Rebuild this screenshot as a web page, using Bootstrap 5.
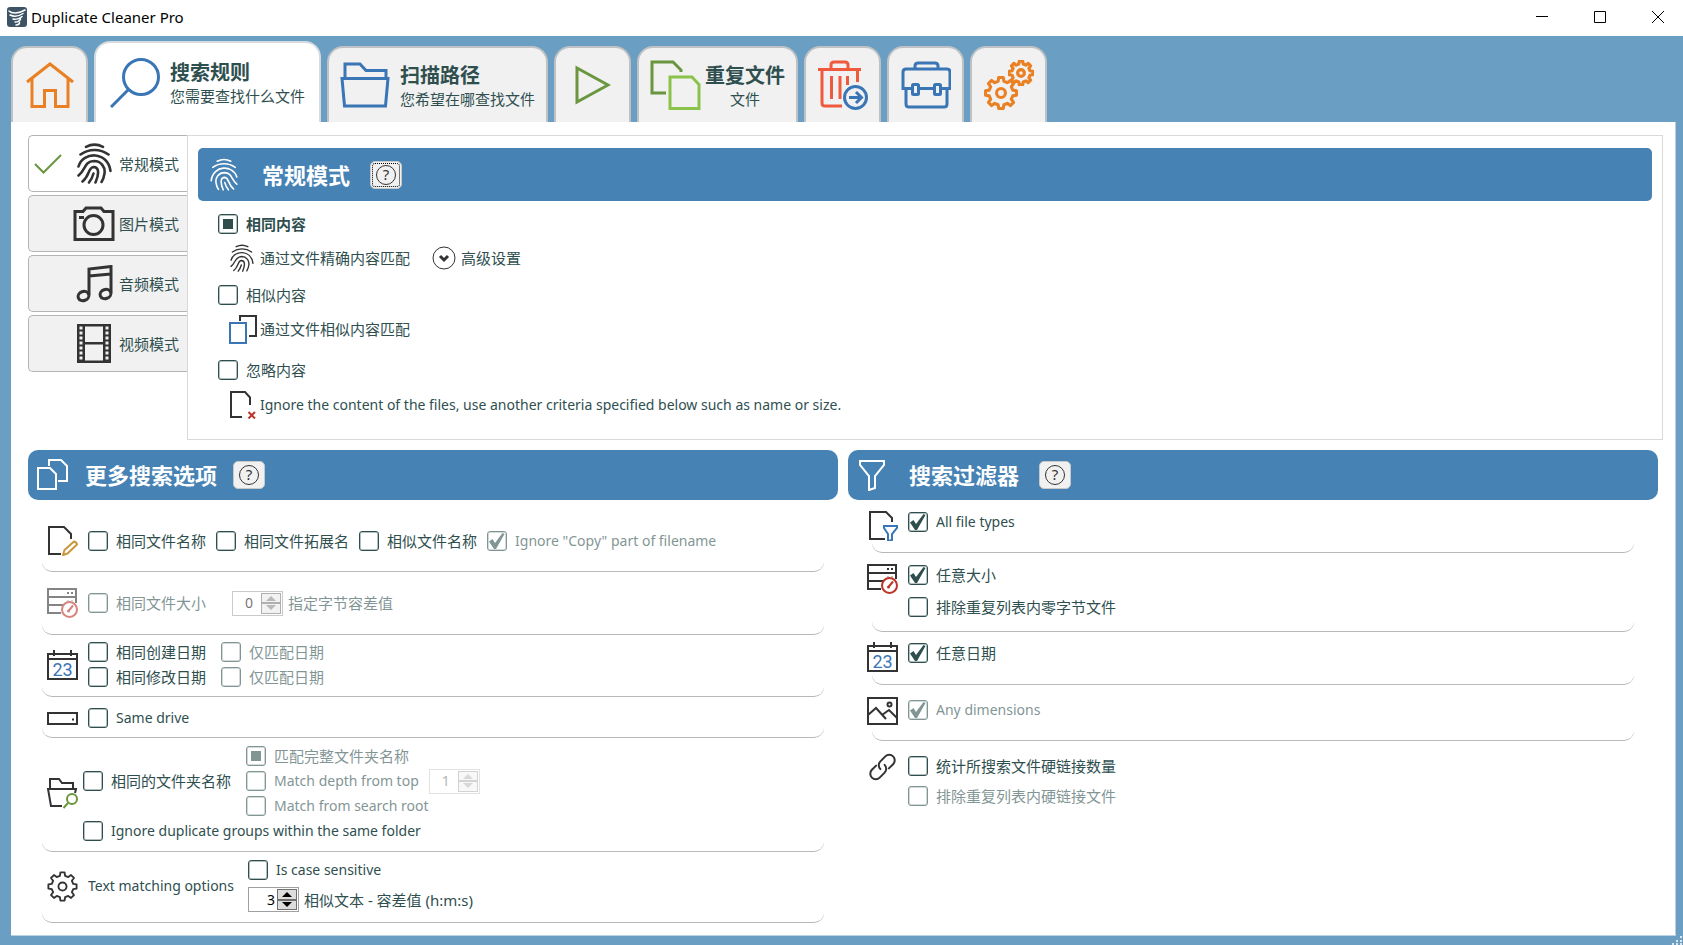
<!DOCTYPE html>
<html lang="zh-CN">
<head>
<meta charset="utf-8">
<meta name="viewport" content="width=device-width, initial-scale=1">
<title>Duplicate Cleaner Pro</title>
<link href="https://cdn.jsdelivr.net/npm/bootstrap@5.3.0/dist/css/bootstrap.min.css" rel="stylesheet">
<style>
:root{--ink:#2f4f4f;--frame:#6a9ec2;--steel:#4682b4;--face:#f1f1f1;--line:#b8b8b8}
body{font-family:"Noto Sans","Noto Sans CJK SC",sans-serif;font-size:15px;line-height:20px;color:var(--ink);background:var(--frame)}
button{color:inherit}
svg{display:block;flex:none;fill:none;stroke:#333;stroke-width:2}
svg text{stroke:none}
.latin{font-size:14px}
.stroke-3{stroke-width:3}
.tone-orange{stroke:#e98024}
.tone-blue{stroke:#3a75b5}
.tone-green{stroke:#6a963f}

/* title bar */
.title-bar{height:36px;background:#fff;color:#000;padding-left:7px;padding-bottom:2px}
.title-bar .win-btn{width:50px;height:34px}
.title-bar .win-btn svg{stroke:#000;stroke-width:1}

/* main tabs */
.main-tabs{height:86px;gap:6px;padding-left:11px}
.main-tab{height:76px;min-width:77px;background:var(--face);border:2px solid #bfc2c4;border-bottom:0;border-radius:16px 16px 0 0;padding:0 11px}
.main-tab.active{height:81px;background:#fff;border-color:#d4dade;padding:0 14px}
.main-tab .tab-text{padding-top:3px}
.tab-title{font-size:20px;line-height:24px;font-weight:600}
.tab-sub{line-height:22px}

/* page surface */
.surface{background:#fff;margin:0 7px 9px 11px;padding:13px 12px 11px 17px;border-right:1px solid #b9d0e1;border-bottom:1px solid #b9d0e1}

/* mode tabs */
.mode-list{width:159px;gap:3px}
.mode-tab{height:57px;background:var(--face);border:1px solid #b4b4b4;border-right:0;border-radius:5px 0 0 5px;padding:0 0 0 5px}
.mode-tab.active{background:#fff}
.mode-check{width:28px;margin-right:11px}
.mode-icon{width:42px;margin-right:4px}

.mode-panel{border:1px solid #d9d9d9;padding:12px 10px 19px}
.section-head{background:var(--steel);color:#fff}
.section-head h2{font-size:22px;line-height:28px;font-weight:700}
.section-head svg{stroke:#fff}
.mode-panel .section-head{height:53px;border-radius:5px;padding-left:12px}
.column-head{height:50px;border-radius:10px}
.filter-head{padding-left:11px}
.help-btn{width:32px;height:28px;margin-left:20px;background:var(--face);border:1px solid #c8c8c8;border-radius:5px}
.help-btn svg{stroke:#333;stroke-width:1}
.help-btn text{fill:#333;font-size:15px}
.help-btn.focused{outline:1px dotted #000;outline-offset:-3px}
.criteria{padding:13px 20px 0}
.sub-line{height:30px;margin:9px 0 12px;padding-left:12px;gap:4px}
.sub-line.tall{margin-bottom:16px}
.sub-line.last{margin:10px 0 0}
.sub-icon{width:26px}
.more-btn{--bs-btn-font-size:15px;--bs-btn-line-height:20px;--bs-btn-color:var(--ink);gap:5px;margin-left:18px}

/* tick boxes */
.tick{display:flex;align-items:center;gap:8px;min-height:20px;white-space:nowrap}
.tick .form-check-input{width:20px;height:20px;margin:0;flex:none;border:1px solid var(--ink);border-radius:3px;background-color:#fff;background-size:18px 18px;box-shadow:inset 0 0 0 1px #b4c0c0}
.tick .form-check-input:checked{background-color:#fff;border-color:var(--ink);background-image:url("data:image/svg+xml,%3Csvg xmlns='http://www.w3.org/2000/svg' viewBox='0 0 18 18'%3E%3Cpath d='M1 9.500l3.500-2.500 2.500 4L14.500 1l2 1L8 17H6z' fill='%232f4f4f'/%3E%3C/svg%3E")}
.tick .form-check-input.square:checked{background-image:url("data:image/svg+xml,%3Csvg xmlns='http://www.w3.org/2000/svg' viewBox='0 0 18 18'%3E%3Cpath d='M4 4h10v10H4z' fill='%232f4f4f'/%3E%3C/svg%3E")}
.tick .form-check-input:disabled{opacity:.6}
.tick .form-check-input:disabled~label{opacity:.6}
.faded{opacity:.6}

/* option rows */
.columns{--bs-gutter-x:10px;margin-top:10px;padding-right:5px}
.opt-row{border-bottom:1px solid var(--line);border-radius:0 0 10px 10px;gap:10px}
.opt-list{margin:0 14px}
.opt-list .opt-row{padding-left:5px}
.opt-icon{width:31px;flex:none}
.row-name{padding-top:26px;padding-bottom:15px}
.row-size{padding-top:16px;padding-bottom:16px}
.row-date{padding-top:7px;padding-bottom:9px}
.row-drive{padding-top:11px;padding-bottom:9px}
.row-folder{padding-top:8px;padding-bottom:10px}
.row-folder.opt-row{gap:5px}
.row-text{padding-top:8px;padding-bottom:10px}
.stack-5{gap:5px}
.stack-7{gap:7px}
.gap-10{gap:10px}
.gap-15{gap:15px}
.filter-list{margin:0 24px}
.filter-list .opt-icon{margin-left:-5px}
.filter-list .opt-row{padding-top:11px;padding-bottom:11px}
.filter-list .row-tall{padding-bottom:14px}
.filter-list .row-close{padding-top:10px;padding-bottom:12px}
.filter-list .row-dim{padding-top:11px;padding-bottom:14px}
.stack-12{gap:12px;padding-top:1px}

/* number box */
.spin{width:51px;height:25px;border:1px solid #a0a0a0;background:#fff;padding:1px}
.spin input{min-width:0;width:27px;border:0;padding:0 2px 0 0;text-align:right;font-size:14px;color:#000;background:none;appearance:textfield;-moz-appearance:textfield}
.spin input::-webkit-inner-spin-button{appearance:none;-webkit-appearance:none}
.spin-btns{width:20px;flex:none}
.spin-btns button{flex:1 1 0;min-height:0;border:1px solid #707070;background:#ddd;padding:0}
.spin-btns svg{fill:#000;stroke:none}
.spin.off{opacity:.55}
.spin.off input{padding-right:8px}
.spin.off button{background:#e9e9e9}
.spin.off svg{fill:#808080}
.spin.dim{opacity:.3}
.in-line{margin:-3px 0}

.grip{right:1px;bottom:0}
.grip svg{fill:#dfe7ee;stroke:none}
</style>
</head>
<body class="d-flex flex-column min-vh-100 m-0">

<svg width="0" height="0" class="position-absolute" aria-hidden="true">
  <symbol id="finger" viewBox="0 0 35 42">
    <path stroke-linecap="round" d="M9 3.800C14.500 1 20.500 1 26 3.800M3.500 11.500C12 5.500 23 5.500 31.500 11.500M1.500 23.500C6 8 31 8 33.500 28M1.500 32.500C9 26.500 7 18.500 17 18C24 18 28.500 24 27.500 30.500C27 34 26.500 36 24.500 39M5.500 38.500C13 32.500 11 24.500 16.500 24C22.500 24 22 31.500 18.500 39.500M12 39.500C14.500 36.500 15.500 34 16.500 30.500"/>
  </symbol>
  <symbol id="gear" viewBox="-16.500 -16.500 33 33">
    <path stroke-linejoin="round" d="M11.400-2.800L15-2.200 15 2.200 11.400 2.800 10 6.100 12.200 9.100 9.100 12.200 6.100 10 2.800 11.400 2.200 15-2.200 15-2.800 11.400-6.100 10-9.100 12.200-12.200 9.100-10 6.100-11.400 2.800-15 2.200-15-2.200-11.400-2.800-10-6.100-12.200-9.100-9.100-12.200-6.100-10-2.800-11.400-2.200-15 2.200-15 2.800-11.400 6.100-10 9.100-12.200 12.200-9.100 10-6.100Z"/>
    <circle r="4.300"/>
  </symbol>
  <symbol id="store" viewBox="0 0 31 30">
    <path d="M14 25H1V1H29V15M1 9H29M1 17H17M20 5H22M24 5H26"/>
    <path stroke="none" fill="#bbb" d="M20 12h2v1h-2zM24 12h2v1h-2z"/>
    <circle cx="22.500" cy="21.500" r="7.500" stroke="#bb3528"/>
    <path d="M21.500 23L26 17.500" stroke="#bb3528"/><circle cx="21.500" cy="23" r="1.500" stroke="none" fill="#bb3528"/>
  </symbol>
</svg>

<header class="title-bar d-flex align-items-center">
  <svg width="20" height="20" viewBox="0 0 20 20" aria-hidden="true"><rect width="20" height="20" rx="3" fill="#3d5466" stroke="none"/><path stroke="#fff" stroke-width="1.500" stroke-linecap="round" d="M2 4C5 7 12 6.500 18 3M3 8C8 10.500 13 8.500 16 6.500M6 12C9 13 13 11.500 15 9.500M8 15C10 15.500 13 14 13.500 12M9 18C11 18 12.500 17 12.500 15.500"/></svg>
  <span class="ms-1">Duplicate Cleaner Pro</span>
  <div class="ms-auto d-flex gap-2">
    <button class="btn p-0 win-btn d-flex align-items-center justify-content-center" aria-label="最小化"><svg width="12" height="12"><path d="M0 5.500H12"/></svg></button>
    <button class="btn p-0 win-btn d-flex align-items-center justify-content-center" aria-label="最大化"><svg width="12" height="12"><path d="M.5 .5H11.500V11.500H.5Z"/></svg></button>
    <button class="btn p-0 win-btn d-flex align-items-center justify-content-center" aria-label="关闭"><svg width="12" height="12"><path d="M0 0L12 12M12 0L0 12"/></svg></button>
  </div>
</header>

<nav class="main-tabs d-flex align-items-end">
  <button class="main-tab d-flex align-items-center justify-content-center" aria-label="主页">
    <svg class="stroke-3 tone-orange" width="48" height="46"><path d="M1 20L24 2L47 20M6 17V44.500H18.500V28.500H29.500V44.500H42V17"/></svg>
  </button>
  <button class="main-tab active d-flex align-items-center gap-10">
    <svg class="stroke-3 tone-blue" width="50" height="50"><circle cx="31" cy="19" r="17.500"/><path d="M18.500 31.500L1 49"/></svg>
    <span class="tab-text text-start"><span class="tab-title d-block">搜索规则</span><span class="tab-sub d-block">您需要查找什么文件</span></span>
  </button>
  <button class="main-tab d-flex align-items-center gap-10">
    <svg class="stroke-3 tone-blue" width="50" height="46"><path d="M2 16.500H48L45.500 44H4.500ZM5 16V2H20L26 8.500H46V16"/></svg>
    <span class="tab-text text-start"><span class="tab-title d-block">扫描路径</span><span class="tab-sub d-block">您希望在哪查找文件</span></span>
  </button>
  <button class="main-tab d-flex align-items-center justify-content-center" aria-label="开始">
    <svg class="stroke-3 tone-green" width="36" height="40"><path d="M2 3L33 20L2 37Z"/></svg>
  </button>
  <button class="main-tab d-flex align-items-center">
    <svg class="stroke-3" width="51" height="50"><path stroke="#6a963f" d="M16 33H2V2H23L31 10V12"/><path stroke="#8bc34a" d="M20 17H42L49 24.500V48.500H20Z"/></svg>
    <span class="tab-text text-center ms-1"><span class="tab-title d-block">重复文件</span><span class="tab-sub d-block">文件</span></span>
  </button>
  <button class="main-tab d-flex align-items-center justify-content-center" aria-label="删除">
    <svg class="stroke-3" width="50" height="50"><path stroke="#ef5a3f" d="M0 9.500H43M13 8V5Q13 2 16 2H27Q30 2 30 5V8M4 9V43Q4 46 7 46H24M39.500 9V22M13.500 16V39M22 16V39M29.500 16V25"/><circle cx="37.500" cy="37.500" r="11" stroke="#3a75b5"/><path stroke="#3a75b5" d="M31 37.500H43M38 32L43.500 37.500L38 43"/></svg>
  </button>
  <button class="main-tab d-flex align-items-center justify-content-center" aria-label="工具">
    <svg class="stroke-3 tone-blue" width="50" height="48"><path d="M14 7.500V5Q14 2 17 2H34Q37 2 37 5V7.500M11 27.500H2V11Q2 8 5 8H46Q49 8 49 11V27.500H40M18 27.500H33M5 28V43Q5 46 8 46H43Q46 46 46 43V28"/><rect x="11.500" y="23.500" width="6" height="10" rx="1"/><rect x="33.500" y="23.500" width="6" height="10" rx="1"/></svg>
  </button>
  <button class="main-tab d-flex align-items-center justify-content-center" aria-label="设置">
    <svg class="tone-orange" width="50" height="50"><use class="stroke-3" href="#gear" x="0" y="16" width="34" height="34"/><use href="#gear" x="24" y="0" width="26" height="26" stroke-width="4"/></svg>
  </button>
</nav>

<main class="surface flex-grow-1">
  <section class="d-flex align-items-start">
    <div class="mode-list d-flex flex-column flex-shrink-0">
      <button class="mode-tab active d-flex align-items-center">
        <span class="mode-check"><svg class="tone-green" width="28" height="22"><path d="M1 11L9.500 19.500L27 2"/></svg></span>
        <span class="mode-icon d-flex justify-content-center"><svg width="35" height="42" stroke-width="3"><use href="#finger" stroke-width="2.600"/></svg></span><span>常规模式</span>
      </button>
      <button class="mode-tab d-flex align-items-center">
        <span class="mode-check"></span>
        <span class="mode-icon d-flex justify-content-center"><svg class="stroke-3" width="42" height="36"><path d="M2 5.500H10L13 2H28L31 5.500H40V33.500H2ZM6 11.500H11"/><circle cx="20.500" cy="19" r="9.500"/></svg></span><span>图片模式</span>
      </button>
      <button class="mode-tab d-flex align-items-center">
        <span class="mode-check"></span>
        <span class="mode-icon d-flex justify-content-center"><svg class="stroke-3" width="37" height="38"><path d="M13 30V4L35 1.500V28M13 11L35 9"/><ellipse cx="7.500" cy="31" rx="5.500" ry="4.500" transform="rotate(-20 7.500 31)"/><ellipse cx="29.500" cy="29" rx="5.500" ry="4.500" transform="rotate(-20 29.500 29)"/></svg></span><span>音频模式</span>
      </button>
      <button class="mode-tab d-flex align-items-center">
        <span class="mode-check"></span>
        <span class="mode-icon d-flex justify-content-center"><svg width="34" height="39"><path fill="#333" stroke="none" d="M0 0H34V39H0Z"/><path fill="#f1f1f1" stroke="none" d="M8 2.500H26V18H8ZM8 20.500H26V36.500H8Z"/><path stroke="#f1f1f1" stroke-width="3" stroke-dasharray="3 2" d="M4 2.500V37M30 2.500V37"/></svg></span><span>视频模式</span>
      </button>
    </div>

    <div class="mode-panel flex-grow-1">
      <div class="section-head d-flex align-items-center">
        <svg width="28" height="36"><use href="#finger" transform="matrix(-1 0 0 1 28 0)"/></svg>
        <h2 class="mb-0 ms-4">常规模式</h2>
        <button class="help-btn focused p-0 d-flex align-items-center justify-content-center" aria-label="帮助"><svg width="22" height="22"><circle cx="11" cy="11" r="9.500"/><text x="11" y="16" text-anchor="middle">?</text></svg></button>
      </div>
      <div class="criteria">
        <div class="tick"><input class="form-check-input square" type="checkbox" id="same" checked><label for="same" class="fw-bold">相同内容</label></div>
        <div class="sub-line d-flex align-items-center">
          <span class="sub-icon"><svg width="24" height="29"><use href="#finger"/></svg></span><span>通过文件精确内容匹配</span>
          <button class="more-btn btn p-0 border-0 d-flex align-items-center"><svg width="24" height="24" stroke-width="1"><circle cx="12" cy="12" r="11" stroke-width="1"/><path class="stroke-3" d="M8 10L12 14L16 10"/></svg><span>高级设置</span></button>
        </div>
        <div class="tick"><input class="form-check-input" type="checkbox" id="similar"><label for="similar">相似内容</label></div>
        <div class="sub-line tall d-flex align-items-center">
          <span class="sub-icon d-flex justify-content-center"><svg width="30" height="29"><path d="M12 6V1H28V21H21"/><path stroke="#3a75b5" d="M2 8H18V28H2Z"/></svg></span><span>通过文件相似内容匹配</span>
        </div>
        <div class="tick"><input class="form-check-input" type="checkbox" id="ignore"><label for="ignore">忽略内容</label></div>
        <div class="sub-line last d-flex align-items-center">
          <span class="sub-icon"><svg width="26" height="28"><path d="M12 26H1V1H15L20 6.500V14"/><path stroke="#bb3528" d="M18.500 21L25 27.500M25 21L18.500 27.500"/></svg></span><span class="latin">Ignore the content of the files, use another criteria specified below such as name or size.</span>
        </div>
      </div>
    </div>
  </section>

  <section class="row columns">
    <div class="col-6">
      <div class="section-head column-head d-flex align-items-center ps-2">
        <svg width="33" height="32"><path d="M13 7V1H25L31 7V22H22M2 9H14L20 15V30H2Z"/></svg>
        <h2 class="mb-0 ms-3">更多搜索选项</h2>
        <button class="help-btn p-0 ms-3 d-flex align-items-center justify-content-center" aria-label="帮助"><svg width="22" height="22"><circle cx="11" cy="11" r="9.500"/><text x="11" y="16" text-anchor="middle">?</text></svg></button>
      </div>
      <div class="opt-list">
        <div class="opt-row row-name d-flex align-items-center">
          <span class="opt-icon"><svg width="31" height="30"><path d="M14 28H2V1H17L24 8V13"/><path stroke="#c9973b" stroke-linejoin="round" d="M16 29L17.500 24L27 15.500Q29.500 16 30 18.500L20.500 27.500Z"/></svg></span>
          <div class="tick"><input class="form-check-input" type="checkbox" id="n1"><label for="n1">相同文件名称</label></div>
          <div class="tick"><input class="form-check-input" type="checkbox" id="n2"><label for="n2">相同文件拓展名</label></div>
          <div class="tick"><input class="form-check-input" type="checkbox" id="n3"><label for="n3">相似文件名称</label></div>
          <div class="tick"><input class="form-check-input" type="checkbox" id="n4" checked disabled><label for="n4" class="latin">Ignore "Copy" part of filename</label></div>
        </div>
        <div class="opt-row row-size d-flex align-items-center">
          <span class="opt-icon faded"><svg width="31" height="30"><use href="#store"/></svg></span>
          <div class="tick"><input class="form-check-input" type="checkbox" id="s1" disabled><label for="s1">相同文件大小</label></div>
          <div class="d-flex align-items-center ms-3 stack-5">
            <div class="spin off d-flex"><input type="number" id="s2" value="0" disabled><div class="spin-btns d-flex flex-column"><button disabled class="d-flex align-items-center justify-content-center" aria-label="增加"><svg width="12" height="6"><path d="M1 6L6 1L11 6Z"/></svg></button><button disabled class="d-flex align-items-center justify-content-center" aria-label="减少"><svg width="12" height="6"><path d="M1 0L6 5L11 0Z"/></svg></button></div></div>
            <label for="s2" class="faded">指定字节容差值</label>
          </div>
        </div>
        <div class="opt-row row-date d-flex align-items-center">
          <span class="opt-icon"><svg width="31" height="30" viewBox="0 0 31 30"><path d="M1 4H30V29H1ZM1 9H30M7 0V6M24 0V6"/><text x="15.500" y="26" text-anchor="middle" font-family="Roboto" font-size="18" fill="#3a75b5">23</text></svg></span>
          <div class="d-flex flex-column stack-5">
            <div class="d-flex gap-15">
              <div class="tick"><input class="form-check-input" type="checkbox" id="d1"><label for="d1">相同创建日期</label></div>
              <div class="tick"><input class="form-check-input" type="checkbox" id="d2" disabled><label for="d2">仅匹配日期</label></div>
            </div>
            <div class="d-flex gap-15">
              <div class="tick"><input class="form-check-input" type="checkbox" id="d3"><label for="d3">相同修改日期</label></div>
              <div class="tick"><input class="form-check-input" type="checkbox" id="d4" disabled><label for="d4">仅匹配日期</label></div>
            </div>
          </div>
        </div>
        <div class="opt-row row-drive d-flex align-items-center">
          <span class="opt-icon"><svg width="31" height="13"><path d="M1 1H30V12H1ZM25 7.500H27"/></svg></span>
          <div class="tick"><input class="form-check-input" type="checkbox" id="v1"><label for="v1" class="latin">Same drive</label></div>
        </div>
        <div class="opt-row row-folder d-flex align-items-center">
          <span class="opt-icon"><svg width="31" height="31"><path d="M15 28H4L1 11H29L28 15M3 11V1H12L15 5H26V11"/><circle cx="25" cy="21" r="5" stroke="#6a963f"/><path stroke="#6a963f" d="M21 25L16.500 30"/></svg></span>
          <div class="d-flex flex-column stack-5">
            <div class="d-flex align-items-center gap-15">
              <div class="tick"><input class="form-check-input" type="checkbox" id="f1"><label for="f1">相同的文件夹名称</label></div>
              <div class="d-flex flex-column stack-5">
                <div class="tick"><input class="form-check-input square" type="checkbox" id="f2" checked disabled><label for="f2">匹配完整文件夹名称</label></div>
                <div class="d-flex align-items-center gap-10">
                  <div class="tick"><input class="form-check-input" type="checkbox" id="f3" disabled><label for="f3" class="latin">Match depth from top</label></div>
                  <div class="spin off dim in-line d-flex"><input type="number" value="1" disabled aria-label="Match depth"><div class="spin-btns d-flex flex-column"><button disabled class="d-flex align-items-center justify-content-center" aria-label="增加"><svg width="12" height="6"><path d="M1 6L6 1L11 6Z"/></svg></button><button disabled class="d-flex align-items-center justify-content-center" aria-label="减少"><svg width="12" height="6"><path d="M1 0L6 5L11 0Z"/></svg></button></div></div>
                </div>
                <div class="tick"><input class="form-check-input" type="checkbox" id="f4" disabled><label for="f4" class="latin">Match from search root</label></div>
              </div>
            </div>
            <div class="tick"><input class="form-check-input" type="checkbox" id="f5"><label for="f5" class="latin">Ignore duplicate groups within the same folder</label></div>
          </div>
        </div>
        <div class="opt-row row-text d-flex align-items-center">
          <span class="opt-icon"><svg width="31" height="31"><use href="#gear"/></svg></span>
          <span class="latin me-1">Text matching options</span>
          <div class="d-flex flex-column stack-7">
            <div class="tick"><input class="form-check-input" type="checkbox" id="t1"><label for="t1" class="latin">Is case sensitive</label></div>
            <div class="d-flex align-items-center stack-5">
              <div class="spin d-flex"><input type="number" id="t2" value="3"><div class="spin-btns d-flex flex-column"><button class="d-flex align-items-center justify-content-center" aria-label="增加"><svg width="12" height="6"><path d="M1 6L6 1L11 6Z"/></svg></button><button class="d-flex align-items-center justify-content-center" aria-label="减少"><svg width="12" height="6"><path d="M1 0L6 5L11 0Z"/></svg></button></div></div>
              <label for="t2">相似文本 - 容差值 (h:m:s)</label>
            </div>
          </div>
        </div>
      </div>
    </div>

    <div class="col-6">
      <div class="section-head column-head filter-head d-flex align-items-center">
        <svg width="26" height="31"><path d="M1 1H25V5L16 16V28L10 30V16L1 5Z"/></svg>
        <h2 class="mb-0 ms-4">搜索过滤器</h2>
        <button class="help-btn p-0 d-flex align-items-center justify-content-center" aria-label="帮助"><svg width="22" height="22"><circle cx="11" cy="11" r="9.500"/><text x="11" y="16" text-anchor="middle">?</text></svg></button>
      </div>
      <div class="filter-list">
        <div class="opt-row d-flex align-items-start">
          <span class="opt-icon"><svg width="31" height="30"><path d="M18 28H3V1H19L25 7V11"/><path stroke="#3a75b5" d="M17 15H30V17L25 23V29L21 30V23L17 17Z"/></svg></span>
          <div class="stack-12"><div class="tick"><input class="form-check-input" type="checkbox" id="r1" checked><label for="r1" class="latin">All file types</label></div></div>
        </div>
        <div class="opt-row row-tall d-flex align-items-start">
          <span class="opt-icon"><svg width="31" height="30"><use href="#store"/></svg></span>
          <div class="stack-12 d-flex flex-column">
            <div class="tick"><input class="form-check-input" type="checkbox" id="r2" checked><label for="r2">任意大小</label></div>
            <div class="tick"><input class="form-check-input" type="checkbox" id="r3"><label for="r3">排除重复列表内零字节文件</label></div>
          </div>
        </div>
        <div class="opt-row row-close d-flex align-items-start">
          <span class="opt-icon"><svg width="31" height="30" viewBox="0 0 31 30"><path d="M1 4H30V29H1ZM1 9H30M7 0V6M24 0V6"/><text x="15.500" y="26" text-anchor="middle" font-family="Roboto" font-size="18" fill="#3a75b5">23</text></svg></span>
          <div class="stack-12"><div class="tick"><input class="form-check-input" type="checkbox" id="r4" checked><label for="r4">任意日期</label></div></div>
        </div>
        <div class="opt-row row-dim d-flex align-items-start">
          <span class="opt-icon"><svg width="31" height="30"><path d="M1 2H30V28H1ZM1 19L9 12L19 23M15 19L22 14L30 22"/><circle cx="22.500" cy="8.500" r="2"/></svg></span>
          <div class="pt-1"><div class="tick"><input class="form-check-input" type="checkbox" id="r5" checked disabled><label for="r5" class="latin">Any dimensions</label></div></div>
        </div>
        <div class="opt-row border-0 d-flex align-items-start">
          <span class="opt-icon"><svg width="31" height="30" stroke-linecap="round"><g transform="rotate(-45 15.500 15)"><path d="M12 9.500H6A5.500 5.500 0 0 0 6 20.500H13A5.500 5.500 0 0 0 18.500 15M19 20.500H25A5.500 5.500 0 0 0 25 9.500H18A5.500 5.500 0 0 0 12.500 15"/></g></svg></span>
          <div class="pt-1 gap-10 d-flex flex-column">
            <div class="tick"><input class="form-check-input" type="checkbox" id="r6"><label for="r6">统计所搜索文件硬链接数量</label></div>
            <div class="tick"><input class="form-check-input" type="checkbox" id="r7" disabled><label for="r7">排除重复列表内硬链接文件</label></div>
          </div>
        </div>
      </div>
    </div>
  </section>
</main>

<div class="grip position-fixed" aria-hidden="true"><svg width="10" height="10"><path d="M8 1h2v2H8zM4 5h2v2H4zM8 5h2v2H8zM0 8h2v2H0zM4 8h2v2H4zM8 8h2v2H8z"/></svg></div>

<script src="https://cdn.jsdelivr.net/npm/bootstrap@5.3.0/dist/js/bootstrap.bundle.min.js"></script>
</body>
</html>
